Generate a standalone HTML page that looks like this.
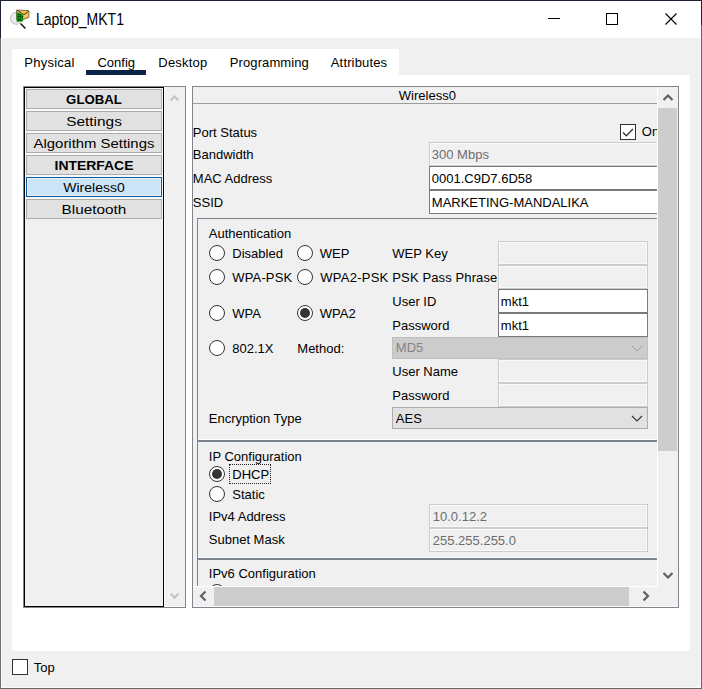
<!DOCTYPE html>
<html><head><meta charset="utf-8">
<style>
*{margin:0;padding:0;box-sizing:border-box}
html,body{width:702px;height:689px;overflow:hidden;background:#f0f0f0}
body{position:relative;font-family:"Liberation Sans",sans-serif;font-size:13px;color:#000}
.a{position:absolute}
.t{position:absolute;white-space:nowrap;font-size:13px;line-height:13px;margin-left:0.8px}
.g{color:#6d6d6d}
.radio{position:absolute;width:16px;height:16px;border:1px solid #333;border-radius:50%;background:#fff}
.radio.on::after{content:"";position:absolute;left:2px;top:2px;width:10px;height:10px;border-radius:50%;background:#333}
.fd{position:absolute;border:1px solid #cccccc;background:#f0f0f0;box-shadow:inset 1px 1px 0 #fafafa,inset -1px -1px 0 #fafafa}
.fe{position:absolute;border:1px solid #7a7a7a;background:#fff}
.btn{position:absolute;left:26px;width:136px;height:20px;border:1px solid #adadad;background:#e1e1e1;text-align:center;font-size:12px;line-height:12px;white-space:nowrap}
.btn span{position:absolute;left:0;right:0;top:4px;transform:scaleX(1.22)}
.frm{position:absolute;background:#7d838d}
.wl{position:absolute;background:#fbfbfb}
</style></head><body>
<!-- window frame -->
<div class="a" style="left:0;top:0;width:702px;height:1px;background:#1b2433"></div>
<div class="a" style="left:0;top:0;width:1px;height:38px;background:#1b2433"></div>
<div class="a" style="left:0;top:38px;width:1px;height:651px;background:#6b6f72"></div>
<div class="a" style="left:1px;top:38px;width:1px;height:650px;background:#fafafa"></div>
<div class="a" style="left:701px;top:0;width:1px;height:25px;background:#1b2433"></div>
<div class="a" style="left:701px;top:25px;width:1px;height:664px;background:#666"></div>
<div class="a" style="left:0;top:688px;width:702px;height:1px;background:#666"></div>
<div class="a" style="left:1px;top:687px;width:700px;height:1px;background:#fafafa"></div>
<div class="a" style="left:700px;top:38px;width:1px;height:650px;background:#fafafa"></div>
<!-- title bar -->
<div class="a" style="left:1px;top:1px;width:700px;height:37px;background:#fff"></div>
<svg class="a" style="left:8px;top:6px" width="28" height="26" viewBox="0 0 28 26">
  <circle cx="8.4" cy="12.4" r="5.9" fill="#ebebeb" stroke="#a0a0a0" stroke-width="0.7"/>
  <line x1="12.6" y1="17.6" x2="17.4" y2="22.6" stroke="#111" stroke-width="1.5"/>
  <path d="M8.6 4 L20.6 4.6 L21 5.4 L20.8 11.6 L15 13.4 L8.6 13.4 Z" fill="#f2c45c" stroke="#2a2010" stroke-width="0.6"/>
  <path d="M9.2 4.4 L16 8.6 L20.6 5.4" fill="none" stroke="#2a2010" stroke-width="0.9"/>
  <path d="M8.6 6.6 L11 6.8 L15.2 9.2 L15.2 15.2 L8.6 16 Z" fill="#0aa00a"/>
  <g fill="#003000"><rect x="9.8" y="7.8" width="1.3" height="1.3"/><rect x="11.8" y="8.2" width="1.3" height="1.3"/><rect x="9.8" y="10" width="1.3" height="1.3"/><rect x="11.8" y="10" width="1.3" height="1.3"/><rect x="13.8" y="10.2" width="1.2" height="1.3"/><rect x="9.8" y="12.3" width="1" height="2.6"/><rect x="11.8" y="12.3" width="1" height="2.6"/></g>
</svg>
<div class="t" style="left:35px;top:11.7px;font-size:16px;line-height:16px;transform:scaleX(0.875);transform-origin:0 0;color:#000">Laptop_MKT1</div>
<div class="a" style="left:548px;top:18px;width:12px;height:1px;background:#000"></div>
<div class="a" style="left:606px;top:13px;width:12px;height:12px;border:1px solid #000"></div>
<svg class="a" style="left:664px;top:12px" width="14" height="14" viewBox="0 0 14 14"><path d="M1.5 1.5 L12.5 12.5 M12.5 1.5 L1.5 12.5" stroke="#000" stroke-width="1.1"/></svg>

<!-- tab pane -->
<div class="a" style="left:12px;top:49px;width:387px;height:26px;background:#fff"></div>
<div class="a" style="left:12px;top:75px;width:678px;height:576px;background:#fff"></div>
<div class="t" style="left:23.5px;top:56px;letter-spacing:0.25px">Physical</div>
<div class="t" style="left:96.7px;top:56px;letter-spacing:0px">Config</div>
<div class="a" style="left:86px;top:70px;width:60px;height:5px;background:#0b2346"></div>
<div class="t" style="left:157.5px;top:56px;letter-spacing:0.2px">Desktop</div>
<div class="t" style="left:229px;top:56px;letter-spacing:0.1px">Programming</div>
<div class="t" style="left:330px;top:56px;letter-spacing:0.15px">Attributes</div>

<!-- left list -->
<div class="a" style="left:23px;top:86px;width:163px;height:522px;border:1px solid #7f858f;background:#f0f0f0"></div>
<div class="a" style="left:24px;top:87px;width:140px;height:520px;border:1px solid #000;background:#f0f0f0"></div>
<div class="a" style="left:25px;top:88px;width:138px;height:131px;background:#f9f9f9"></div>
<div class="a" style="left:164px;top:87px;width:1px;height:520px;background:#fafafa"></div>
<div class="a" style="left:164px;top:606px;width:21px;height:1px;background:#fafafa"></div>
<div class="btn" style="top:89px;font-weight:bold"><span style="transform:scaleX(1.1)">GLOBAL</span></div>
<div class="btn" style="top:111px"><span style="transform:scaleX(1.285)">Settings</span></div>
<div class="btn" style="top:133px"><span style="transform:scaleX(1.24)">Algorithm Settings</span></div>
<div class="btn" style="top:155px;font-weight:bold"><span style="transform:scaleX(1.16)">INTERFACE</span></div>
<div class="btn" style="top:177px;border-color:#0a5aa6;background:#cce4f7;box-shadow:inset 0 0 0 1px #e6f2fc"><span style="transform:scaleX(1.167)">Wireless0</span></div>
<div class="btn" style="top:199px"><span style="transform:scaleX(1.277)">Bluetooth</span></div>
<svg class="a" style="left:169px;top:92px" width="12" height="10" viewBox="0 0 12 10"><path d="M1.8 8.4 L5.6 4.4 L9.4 8.4" fill="none" stroke="#c2c2c2" stroke-width="2.1"/></svg>
<svg class="a" style="left:169px;top:592px" width="12" height="10" viewBox="0 0 12 10"><path d="M1.8 1.8 L5.6 5.8 L9.4 1.8" fill="none" stroke="#c2c2c2" stroke-width="2.1"/></svg>

<!-- right panel -->
<div class="a" style="left:192px;top:86px;width:487px;height:522px;border:1px solid #7f858f;background:#f0f0f0"></div>
<div class="a" style="left:193px;top:87px;width:464px;height:499px;overflow:hidden">
  <!-- coordinates inside offset by (193,87) -->
  <div class="a" style="left:0;top:16px;width:464px;height:1px;background:#9d9d9d"></div>
  <div class="t" style="left:205px;top:2.2px">Wireless0</div>
  <div class="t" style="left:-1px;top:39px">Port Status</div>
  <div class="t" style="left:-1px;top:60.7px">Bandwidth</div>
  <div class="t" style="left:-1px;top:84.7px">MAC Address</div>
  <div class="t" style="left:-1px;top:108.6px">SSID</div>
  <div class="a" style="left:427px;top:37px;width:16px;height:16px;border:1px solid #333;background:#fff"></div>
  <svg class="a" style="left:427px;top:37px" width="16" height="16" viewBox="0 0 16 16"><path d="M3 8.5 L6.3 11.8 L13 5" fill="none" stroke="#333" stroke-width="1.3"/></svg>
  <div class="t" style="left:448px;top:38.4px">On</div>
  <div class="fd" style="left:236px;top:55px;width:240px;height:24px"></div>
  <div class="t g" style="left:238px;top:60.6px">300 Mbps</div>
  <div class="fe" style="left:236px;top:79px;width:240px;height:24px"></div>
  <div class="t" style="left:238px;top:84.6px">0001.C9D7.6D58</div>
  <div class="fe" style="left:236px;top:103px;width:240px;height:24px"></div>
  <div class="t" style="left:238px;top:108.6px">MARKETING-MANDALIKA</div>

  <!-- auth group -->
  <div class="frm" style="left:4px;top:131px;width:470px;height:1px"></div>
  <div class="frm" style="left:4px;top:131px;width:1px;height:222px"></div>
  
  
  
  
  <div class="t" style="left:15px;top:139.9px">Authentication</div>
  <div class="radio" style="left:16px;top:158px"></div><div class="t" style="left:38.5px;top:159.8px">Disabled</div>
  <div class="radio" style="left:104px;top:158px"></div><div class="t" style="left:126px;top:159.8px">WEP</div>
  <div class="t" style="left:198.5px;top:159.6px">WEP Key</div>
  <div class="fd" style="left:305px;top:154px;width:150px;height:24px"></div>
  <div class="radio" style="left:16px;top:182px"></div><div class="t" style="left:38.5px;top:183.7px;letter-spacing:0.15px">WPA-PSK</div>
  <div class="radio" style="left:104px;top:182px"></div><div class="t" style="left:126.5px;top:183.7px;letter-spacing:0.25px">WPA2-PSK</div>
  <div class="t" style="left:198.5px;top:184.2px;letter-spacing:0.12px">PSK Pass Phrase</div>
  <div class="fd" style="left:305px;top:178px;width:150px;height:24px"></div>
  <div class="t" style="left:198.5px;top:207.7px">User ID</div>
  <div class="fe" style="left:305px;top:202px;width:150px;height:24px"></div>
  <div class="t" style="left:307px;top:207.5px">mkt1</div>
  <div class="radio" style="left:16px;top:218px"></div><div class="t" style="left:38.5px;top:219.8px">WPA</div>
  <div class="radio on" style="left:104px;top:218px"></div><div class="t" style="left:126px;top:219.8px">WPA2</div>
  <div class="t" style="left:198.5px;top:232.3px">Password</div>
  <div class="fe" style="left:305px;top:226px;width:150px;height:24px"></div>
  <div class="t" style="left:307px;top:231.5px">mkt1</div>
  <div class="radio" style="left:16px;top:253px"></div><div class="t" style="left:38.5px;top:254.7px">802.1X</div>
  <div class="t" style="left:103.5px;top:254.7px">Method:</div>
  <div class="a" style="left:199px;top:250px;width:256px;height:22px;border:1px solid #bfbfbf;background:#cccccc"></div>
  <div class="t" style="left:202px;top:254.3px;color:#838383">MD5</div>
  <svg class="a" style="left:438px;top:258px" width="12" height="7" viewBox="0 0 12 7"><path d="M1 1 L6 6 L11 1" fill="none" stroke="#a0a0a0" stroke-width="1"/></svg>
  <div class="t" style="left:198.5px;top:277.5px">User Name</div>
  <div class="fd" style="left:305px;top:272px;width:150px;height:24px"></div>
  <div class="t" style="left:198.5px;top:302.3px">Password</div>
  <div class="fd" style="left:305px;top:296px;width:150px;height:24px"></div>
  <div class="t" style="left:15px;top:325px">Encryption Type</div>
  <div class="a" style="left:199px;top:320px;width:256px;height:22px;border:1px solid #adadad;background:#e1e1e1"></div>
  <div class="t" style="left:202px;top:324.5px">AES</div>
  <svg class="a" style="left:438px;top:328px" width="12" height="7" viewBox="0 0 12 7"><path d="M1 1 L6 6 L11 1" fill="none" stroke="#333" stroke-width="1.1"/></svg>

  <!-- separator auth / ip -->
  <div class="wl" style="left:5px;top:352px;width:470px;height:1px;background:#ffffff"></div>
  <div class="frm" style="left:4px;top:353px;width:470px;height:2px"></div>
  
  <div class="frm" style="left:4px;top:353px;width:1px;height:120px"></div>
  

  <div class="t" style="left:15px;top:362.6px">IP Configuration</div>
  <div class="radio on" style="left:16px;top:379px"></div>
  <div class="a" style="left:36px;top:377px;width:42px;height:20px;border:1px dotted #222"></div>
  <div class="t" style="left:38.5px;top:381.2px">DHCP</div>
  <div class="radio" style="left:16px;top:399px"></div><div class="t" style="left:38.5px;top:400.9px">Static</div>
  <div class="t" style="left:15px;top:422.6px">IPv4 Address</div>
  <div class="fd" style="left:236px;top:417px;width:219px;height:24px"></div>
  <div class="t g" style="left:239px;top:422.6px">10.0.12.2</div>
  <div class="t" style="left:15px;top:446.2px">Subnet Mask</div>
  <div class="fd" style="left:236px;top:441px;width:219px;height:24px"></div>
  <div class="t g" style="left:239px;top:446.6px">255.255.255.0</div>

  <div class="wl" style="left:5px;top:470px;width:470px;height:1px;background:#ffffff"></div>
  <div class="frm" style="left:4px;top:471px;width:470px;height:2px"></div>
  
  <div class="frm" style="left:4px;top:471px;width:1px;height:40px"></div>
  
  <div class="t" style="left:15px;top:480.1px">IPv6 Configuration</div>
  <div class="radio" style="left:16px;top:497px"></div>
</div>
<!-- white line at viewport edge -->
<div class="a" style="left:657px;top:87px;width:1px;height:500px;background:#fff"></div>
<div class="a" style="left:193px;top:586px;width:465px;height:1px;background:#fff"></div>
<!-- vertical scrollbar -->
<div class="a" style="left:658px;top:87px;width:20px;height:500px;background:#f0f0f0"></div>
<div class="a" style="left:658px;top:108px;width:19px;height:343px;background:#cdcdcd"></div>
<svg class="a" style="left:662px;top:92px" width="12" height="10" viewBox="0 0 12 10"><path d="M1.5 8 L6 3.5 L10.5 8" fill="none" stroke="#606060" stroke-width="2.2"/></svg>
<svg class="a" style="left:662px;top:571px" width="12" height="10" viewBox="0 0 12 10"><path d="M1.5 2 L6 6.5 L10.5 2" fill="none" stroke="#606060" stroke-width="2.2"/></svg>
<!-- horizontal scrollbar -->
<div class="a" style="left:193px;top:587px;width:485px;height:19px;background:#f0f0f0"></div>
<div class="a" style="left:193px;top:606px;width:485px;height:1px;background:#fafafa"></div>
<div class="a" style="left:214px;top:587px;width:415px;height:19px;background:#cdcdcd"></div>
<svg class="a" style="left:197px;top:590px" width="12" height="12" viewBox="0 0 12 12"><path d="M8.5 1.5 L4 6 L8.5 10.5" fill="none" stroke="#606060" stroke-width="2.2"/></svg>
<svg class="a" style="left:640px;top:590px" width="12" height="12" viewBox="0 0 12 12"><path d="M3.5 1.5 L8 6 L3.5 10.5" fill="none" stroke="#606060" stroke-width="2.2"/></svg>

<!-- bottom Top checkbox -->
<div class="a" style="left:12px;top:659px;width:16px;height:16px;border:1px solid #333;background:#fff"></div>
<div class="t" style="left:33px;top:661px">Top</div>
</body></html>
